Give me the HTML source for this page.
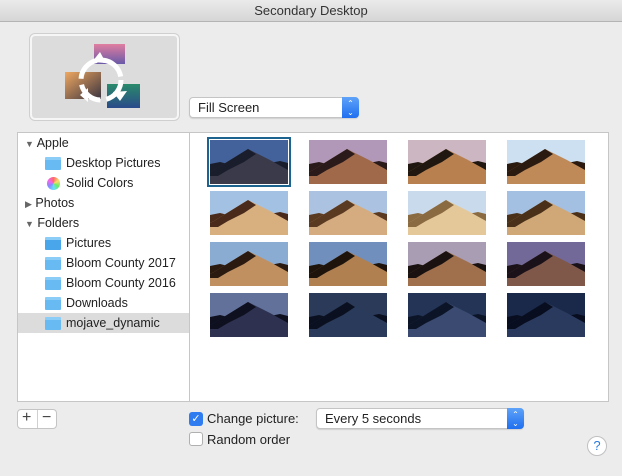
<!DOCTYPE html>
<html><head><meta charset="utf-8"><style>
*{box-sizing:border-box;margin:0;padding:0}
body{width:622px;height:476px;background:#ececec;font-family:"Liberation Sans",sans-serif;font-size:12px;color:#222;position:relative;overflow:hidden}
.title{position:absolute;left:0;top:0;width:622px;height:22px;background:linear-gradient(#ebebeb,#d6d6d6);border-bottom:1px solid #b4b4b4;text-align:center;font-size:13px;line-height:22px;color:#333}
.a{position:absolute}
.prev{left:30px;top:34px;width:149px;height:86px;background:#dcdcdc;border:2px solid #f6f6f6;border-radius:5px;box-shadow:0 0 0 1px #cfcfcf}
.pop{background:#fff;border:1px solid #c4c4c4;border-radius:4px;box-shadow:0 1px 1px rgba(0,0,0,.12);font-size:13px;padding-left:8px;line-height:19px}
.arr{position:absolute;right:-1px;top:-1px;width:17px;height:21px;background:linear-gradient(#5ea3f8,#1f6ff0);border-radius:0 4px 4px 0;color:#fff;font-size:8px;text-align:center;line-height:9px;padding-top:2px}
.box{left:17px;top:132px;width:592px;height:270px;background:#fff;border:1px solid #c6c6c6}
.side{left:17px;top:132px;width:173px;height:270px;border-right:1px solid #c6c6c6}
.row{position:absolute;left:1px;width:171px;height:20px;line-height:20px;font-size:12.5px}
.fold{position:absolute;left:27px;top:4px;width:16px;height:13px;background:#67baf2;border-radius:1px;border-top:3px solid #8bcdf7}
.th{position:absolute;width:78px;height:44px;overflow:hidden}
.sel{position:absolute;left:207px;top:137px;width:84px;height:50px;border:2px solid #1c6390}
.btn{background:#fff;border:1px solid #c4c4c4;border-radius:4px}
.cb{width:14px;height:14px;border-radius:3px}
</style></head><body>
<div class="title">Secondary Desktop</div>
<div class="a prev"></div>
<svg class="a" style="left:60px;top:40px" width="90" height="75" viewBox="60 40 90 75">
<defs><linearGradient id="gp" x1="0" y1="0" x2="0" y2="1"><stop offset="0" stop-color="#e07ea0"/><stop offset="1" stop-color="#6a5aa8"/></linearGradient>
<linearGradient id="go" x1="0" y1="0" x2="1" y2="1"><stop offset="0" stop-color="#f0a860"/><stop offset="1" stop-color="#3a3440"/></linearGradient>
<linearGradient id="gg" x1="0" y1="0" x2="0" y2="1"><stop offset="0" stop-color="#2a8a6a"/><stop offset="1" stop-color="#2a4a8a"/></linearGradient></defs>
<rect x="94" y="44" width="31" height="20" fill="url(#gp)"/>
<rect x="65" y="72" width="36" height="27" fill="url(#go)"/>
<rect x="107" y="84" width="33" height="24" fill="url(#gg)"/>
<circle cx="101" cy="80" r="20" fill="none" stroke="#fff" stroke-width="5" stroke-dasharray="26 6"/>
<polygon points="100,52 92,62 106,63" fill="#fff"/><polygon points="113,92 127,91 120,101" fill="#fff"/><polygon points="80,95 88,88 88,102" fill="#fff"/>
</svg>
<div class="a pop" style="left:189px;top:97px;width:170px;height:21px">Fill Screen<div class="arr">&#8963;<br>&#8964;</div></div>
<div class="a box"></div>
<div class="a side">
<div class="row" style="top:1px;left:8px;font-size:12.5px"><span style="font-size:9px;color:#666">&#9660;</span> Apple</div>
<div class="row" style="top:21px"><div class="fold"></div><span style="position:absolute;left:48px">Desktop Pictures</span></div>
<div class="row" style="top:41px"><div style="position:absolute;left:29px;top:4px;width:13px;height:13px;border-radius:50%;background:conic-gradient(#f66,#fd6,#6e6,#6df,#88f,#e6e,#f66)"></div><span style="position:absolute;left:48px">Solid Colors</span></div>
<div class="row" style="top:61px;left:8px"><span style="font-size:9px;color:#666">&#9654;</span> Photos</div>
<div class="row" style="top:81px;left:8px"><span style="font-size:9px;color:#666">&#9660;</span> Folders</div>
<div class="row" style="top:101px"><div class="fold" style="background:#4aa6ea"></div><span style="position:absolute;left:48px">Pictures</span></div>
<div class="row" style="top:121px"><div class="fold"></div><span style="position:absolute;left:48px">Bloom County 2017</span></div>
<div class="row" style="top:141px"><div class="fold"></div><span style="position:absolute;left:48px">Bloom County 2016</span></div>
<div class="row" style="top:161px"><div class="fold"></div><span style="position:absolute;left:48px">Downloads</span></div>
<div class="row" style="top:181px;background:#dcdcdc"><div class="fold"></div><span style="position:absolute;left:48px">mojave_dynamic</span></div>
</div>
<div class="sel"></div>
<div id="thumbs"></div>
<script>
var s=[["#2c4a80","#5a7ab8","#1a1e2c","#3a3a4a"],["#c8a8c8","#9a88a8","#2a1a1a","#a06a4a"],["#c0b4cc","#d8b8b8","#201810","#b8804e"],["#b8d4ee","#e0ecf6","#2a1a10","#c08a58"],
["#6a9ad0","#dce8f4","#4a2a1a","#d8b080"],["#7aa0d0","#dce6f0","#5a3a20","#d4ac80"],["#a8c4e4","#eaf0f6","#8a6a40","#e4c89a"],["#6a9ad4","#dce6f2","#4a3018","#d0a878"],
["#4a7ab8","#cadcec","#2a1a10","#c09060"],["#3a62a0","#a8bcd8","#1e140c","#b08050"],["#7a8ab0","#d8b0b8","#1a1210","#a0704c"],["#4a4a80","#9a88b0","#1a1218","#80584a"],
["#4a5a8a","#7a88aa","#0e1020","#2e3250"],["#1c2a48","#3a4a6a","#0a1020","#2a3a5a"],["#1a2848","#2e4064","#0c1428","#3a4a70"],["#101c38","#24345a","#080e20","#2a3a5e"]];
var h="";for(var i=0;i<16;i++){var c=s[i],x=210+(i%4)*99,y=140+Math.floor(i/4)*51;
h+='<svg class="th" style="left:'+x+'px;top:'+y+'px" viewBox="0 0 78 44"><rect width="78" height="44" fill="'+c[0]+'"/><rect y="0" width="78" height="24" fill="'+c[1]+'" opacity=".5"/><polygon points="0,24 10,22 22,25 60,23 70,21 78,23 78,44 0,44" fill="'+c[2]+'"/><polygon points="4,30 38,9 60,20 78,30 78,44 0,44 0,32" fill="'+c[3]+'"/><polygon points="4,30 38,9 46,14 34,22 18,30 8,36 0,36 0,32" fill="'+c[2]+'"/></svg>';}
document.getElementById("thumbs").innerHTML=h;
</script>
<div class="a btn" style="left:17px;top:409px;width:40px;height:20px"><div class="a" style="left:19px;top:0;width:1px;height:18px;background:#d0d0d0"></div><span class="a" style="left:4px;top:-1px;font-size:16px;color:#444">+</span><span class="a" style="left:24px;top:-1px;font-size:16px;color:#444">&#8722;</span></div>
<div class="a cb" style="left:189px;top:412px;background:#2f7cf0;color:#fff;font-size:11px;line-height:14px;text-align:center">&#10003;</div>
<div class="a" style="left:207px;top:411px;font-size:13px">Change picture:</div>
<div class="a pop" style="left:316px;top:408px;width:208px;height:21px">Every 5 seconds<div class="arr">&#8963;<br>&#8964;</div></div>
<div class="a cb" style="left:189px;top:432px;background:#fff;border:1px solid #b0b0b0"></div>
<div class="a" style="left:207px;top:432px;font-size:13px">Random order</div>
<div class="a" style="left:587px;top:436px;width:20px;height:20px;border-radius:50%;background:#fff;border:1px solid #c0c0c0;color:#2a7ae0;text-align:center;line-height:18px;font-size:13px">?</div>
</body></html>
